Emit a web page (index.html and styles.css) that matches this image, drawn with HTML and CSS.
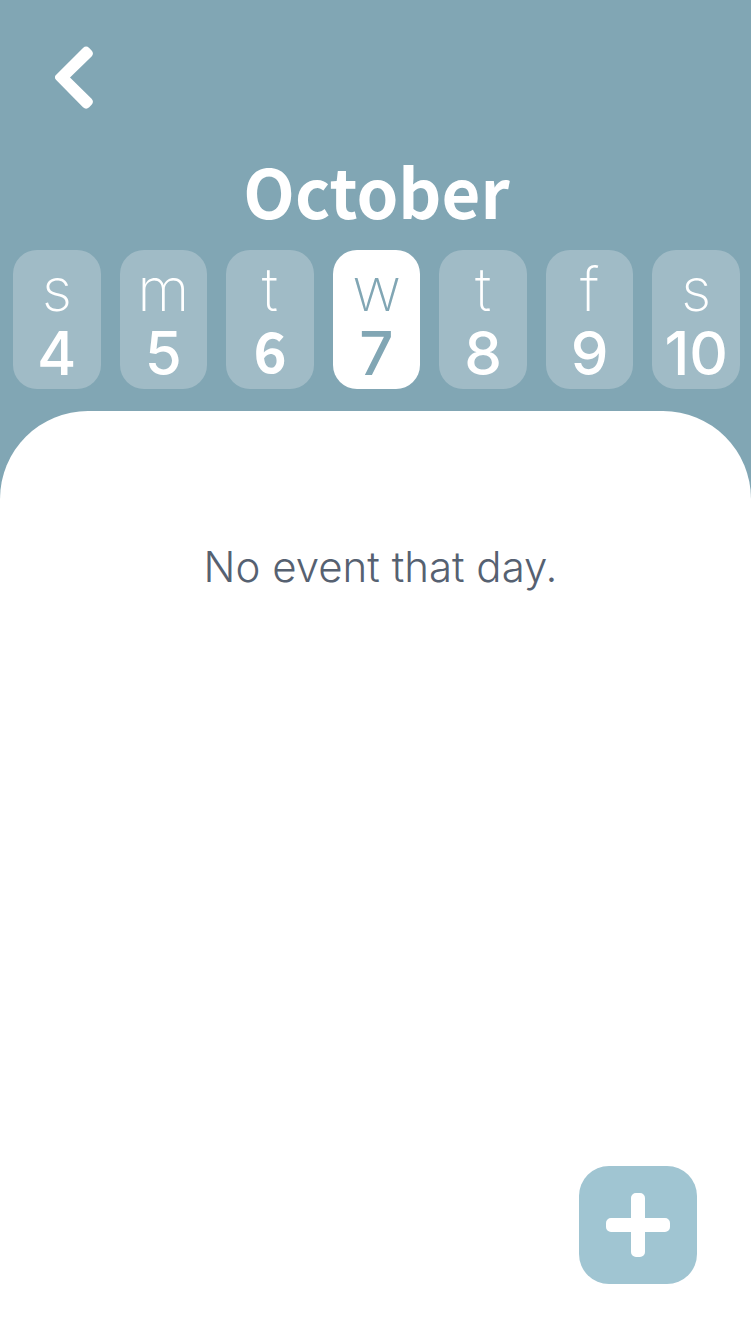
FILE: index.html
```html
<!DOCTYPE html>
<html lang="en">
<head>
<meta charset="utf-8">
<meta name="viewport" content="width=device-width, initial-scale=1">
<title>October</title>
<link rel="stylesheet" href="styles.css">
</head>
<body>
<header class="header">
  <button class="back" type="button" aria-label="Back">
    <svg class="back-icon" viewBox="0 0 38 64" aria-hidden="true"><path d="M1.2 28.700 28 2a4.500 4.500 0 0 1 6.200 0l2.400 2.400a4.500 4.500 0 0 1 0 6L15 31.500l21.600 21.300a4.500 4.500 0 0 1 0 6l-2.400 2.400a4.500 4.500 0 0 1-6.200 0L1.200 34a3.700 3.700 0 0 1 0-5.300z"/></svg>
  </button>
  <h1 class="month">October</h1>
  <nav class="week" aria-label="Days">
    <button class="day" type="button"><span class="letter">s</span><span class="number">4</span></button>
    <button class="day" type="button"><span class="letter">m</span><span class="number">5</span></button>
    <button class="day" type="button"><span class="letter">t</span><span class="number number-today">6</span></button>
    <button class="day day-selected" type="button" aria-current="date"><span class="letter">w</span><span class="number">7</span></button>
    <button class="day" type="button"><span class="letter">t</span><span class="number">8</span></button>
    <button class="day" type="button"><span class="letter">f</span><span class="number">9</span></button>
    <button class="day" type="button"><span class="letter">s</span><span class="number">10</span></button>
  </nav>
</header>
<main class="sheet">
  <p class="empty">No event that day.</p>
  <button class="add" type="button" aria-label="Add event">
    <svg class="add-icon" viewBox="0 0 64 64" aria-hidden="true"><path d="M30 0h4a5 5 0 0 1 5 5v20h20a5 5 0 0 1 5 5v4a5 5 0 0 1-5 5H39v20a5 5 0 0 1-5 5h-4a5 5 0 0 1-5-5V39H5a5 5 0 0 1-5-5v-4a5 5 0 0 1 5-5h20V5a5 5 0 0 1 5-5z"/></svg>
  </button>
</main>
</body>
</html>
```
FILE: styles.css
```css
* { box-sizing: border-box; }
body {
  margin: 0;
  min-height: 100vh;
  display: flex;
  flex-direction: column;
  background: #81a6b4;
  font-family: Inter, "Open Sans", sans-serif;
}
button { border: 0; padding: 0; font: inherit; cursor: pointer; }
.header { padding: 46px 11px 22px 13px; }
.back { display: block; margin-left: 42px; background: none; }
.back-icon { display: block; width: 38px; height: 64px; fill: #fff; }
.month {
  margin: 40px 0 20px;
  color: #fff;
  font: 700 67px/80px "Noto Sans CJK JP", sans-serif;
  text-align: center;
}
.week { display: grid; grid-template-columns: repeat(7, 1fr); gap: 19px; }
.day {
  height: 139px;
  padding-top: 7px;
  display: flex;
  flex-direction: column;
  align-items: center;
  border-radius: 24px;
  background: #a0bbc6;
  color: #fff;
}
.day-selected { background: #fff; color: #81a6b4; }
.letter { font-size: 60px; line-height: 64px; font-weight: 200; }
.number { font-size: 60px; line-height: 64px; font-weight: 500; }
.number-today {
  font-family: "Noto Sans CJK JP", sans-serif;
  font-size: 56px;
  line-height: 56px;
  font-weight: 700;
}
.sheet {
  flex: 1;
  display: flex;
  flex-direction: column;
  justify-content: space-between;
  padding: 128px 54px 51px;
  border-radius: 88px 88px 0 0;
  background: #fff;
}
.empty {
  margin: 0;
  padding-left: 10px;
  color: #566171;
  font-size: 42px;
  line-height: 56px;
  font-weight: 300;
  text-align: center;
}
.add {
  align-self: flex-end;
  width: 118px;
  height: 118px;
  display: grid;
  place-items: center;
  border-radius: 30px;
  background: #a0c5d2;
}
.add-icon { width: 64px; height: 64px; fill: #fff; }
```
